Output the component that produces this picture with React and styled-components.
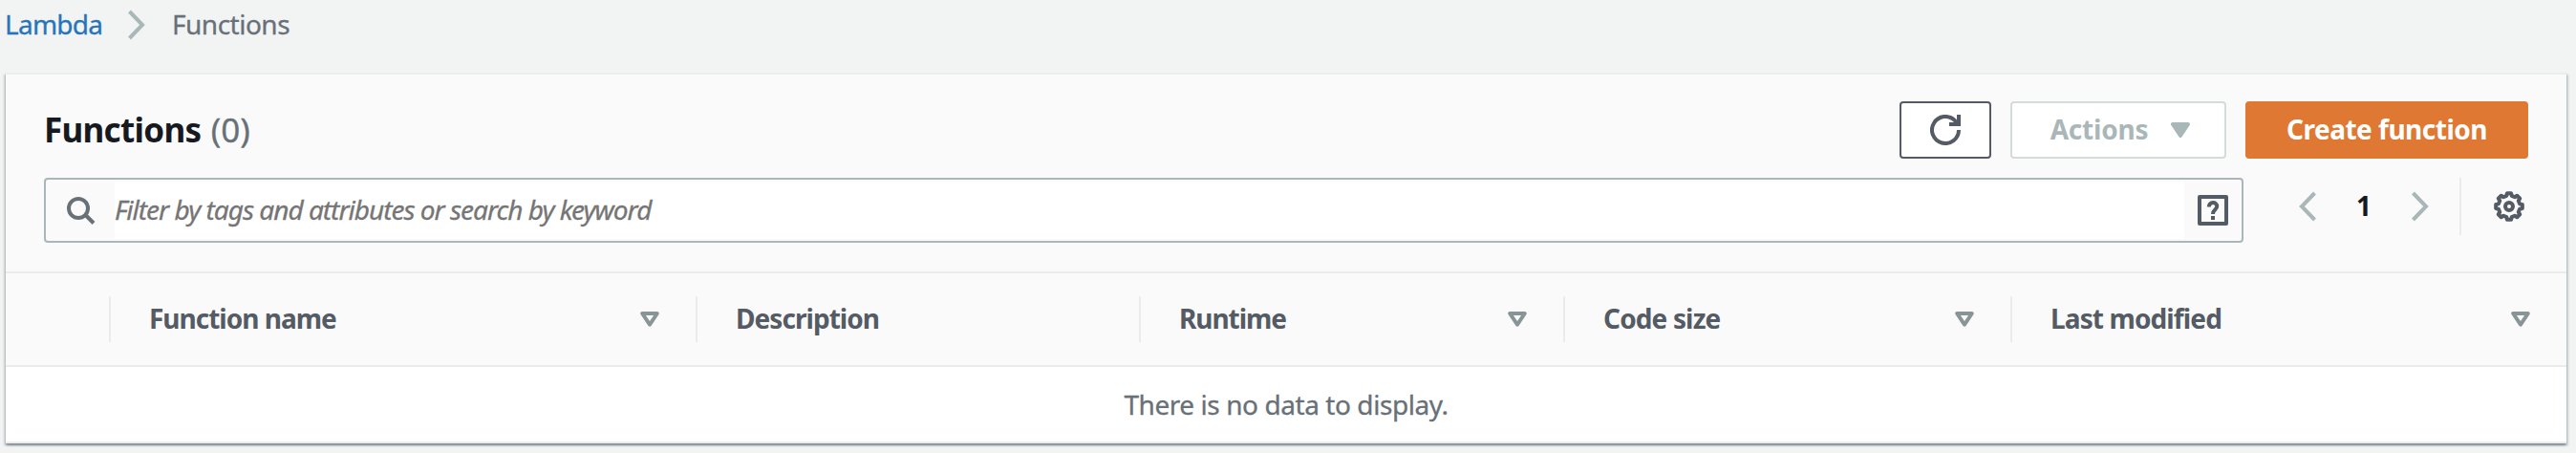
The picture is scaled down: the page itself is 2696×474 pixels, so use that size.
import React from "react";
import styled, { createGlobalStyle } from "styled-components";

const Global = createGlobalStyle`
  * { box-sizing: border-box; }
  body {
    margin: 0;
    background: #f2f4f4;
    font-family: "Noto Sans", "Open Sans", sans-serif;
    font-size: 28px;
    color: #545b64;
  }
`;

const Page = styled.div`
  height: 474px;
  overflow: hidden;
`;

const Breadcrumbs = styled.nav`
  display: flex;
  align-items: center;
  height: 76px;
  padding: 0 0 24px 5px;
  line-height: 36px;
`;

const Crumb = styled.span`
  padding-bottom: 2px;
  color: ${(p) => (p.$link ? "#2874bb" : "#687078")};
  width: ${(p) => (p.$w ? `${p.$w}px` : "auto")};
  letter-spacing: ${(p) => p.$ls}px;
  -webkit-text-stroke: 0.3px currentColor;
  white-space: nowrap;
`;

const CrumbArrow = styled.svg`
  width: 18px;
  height: 32px;
  margin: 0 28px 0 26px;
`;

const Panel = styled.section`
  margin: 0 10px 0 6px;
  height: 388px;
  background: #fff;
  border-top: 2px solid #eaeded;
  border-bottom: 2px solid #eaeded;
  box-shadow: 0 2px 2px 0 rgba(0, 28, 36, 0.3), 2px 2px 2px 0 rgba(0, 28, 36, 0.15),
    -2px 2px 2px 0 rgba(0, 28, 36, 0.15);
`;

const PanelHeader = styled.header`
  height: 208px;
  padding: 28px 40px 0;
  background: #fafafa;
  border-bottom: 2px solid #ebebeb;
`;

const TitleRow = styled.div`
  display: flex;
  align-items: center;
  height: 60px;
  gap: 20px;
`;

const Title = styled.h2`
  flex: 1;
  margin: 0;
  font-size: 35px;
  line-height: 44px;
  font-weight: 700;
  color: #16191f;
  letter-spacing: -0.7px;
`;

const Count = styled.span`
  margin-left: 2px;
  font-weight: 400;
  letter-spacing: 0;
  color: #687078;
  -webkit-text-stroke: 0.3px currentColor;
`;

const Button = styled.button`
  display: flex;
  align-items: center;
  justify-content: center;
  gap: 24px;
  width: ${(p) => p.$w}px;
  height: 60px;
  padding: 0 0 0 ${(p) => p.$inset || 0}px;
  border: 2px solid ${(p) => p.$line};
  border-radius: 4px;
  background: ${(p) => p.$bg || "#fff"};
  color: ${(p) => p.$fg};
  font: 700 28px/40px "Noto Sans", "Open Sans", sans-serif;
  letter-spacing: ${(p) => p.$ls || 0}px;
  white-space: nowrap;
`;

const ButtonText = styled.span`
  padding-bottom: 2px;
`;

const FilterRow = styled.div`
  display: flex;
  margin-top: 20px;
`;

const SearchBox = styled.div`
  display: flex;
  align-items: center;
  flex: 1;
  height: 68px;
  padding: 2px 14px 2px 22px;
  border: 2px solid #aab7b8;
  border-radius: 4px;
`;

const SearchField = styled.div`
  flex: 1;
  height: 60px;
  margin: 0 14px 0 18px;
  background: #fff;
  color: #757575;
  font-style: italic;
  font-size: 28px;
  line-height: 58px;
  letter-spacing: -1px;
  -webkit-text-stroke: 0.3px currentColor;
  white-space: nowrap;
`;

const Pager = styled.div`
  display: flex;
  align-items: center;
  height: 60px;
  padding-left: 58px;
`;

const PageNumber = styled.span`
  width: 100px;
  padding-bottom: 2px;
  text-align: center;
  font-weight: 700;
  color: #16191f;
`;

const Settings = styled.div`
  display: flex;
  align-items: center;
  height: 60px;
  margin-left: 32px;
  padding: 0 4px 0 34px;
  border-left: 2px solid #ebebeb;
`;

const TableHead = styled.div`
  display: grid;
  grid-template-columns: 108px 614px 464px 444px 468px 582px;
  align-items: center;
  height: 98px;
  background: #fafafa;
  border-bottom: 2px solid #ebebeb;
`;

const HeadCell = styled.div`
  display: flex;
  align-items: center;
  justify-content: space-between;
  height: 48px;
  padding: 0 38px 0 40px;
  border-left: ${(p) => (p.$blank ? "none" : "2px solid #ebebeb")};
  font-weight: 700;
  white-space: nowrap;
`;

const HeadLabel = styled.span`
  padding-bottom: 2px;
  letter-spacing: ${(p) => p.$ls}px;
`;

const EmptyRow = styled.div`
  display: flex;
  align-items: center;
  justify-content: center;
  height: 78px;
  color: #687078;
  letter-spacing: -0.43px;
  -webkit-text-stroke: 0.3px currentColor;
`;

const Chevron = ({ left }) => (
  <svg width="18" height="32" viewBox="0 0 18 32" fill="none" stroke="#aab7b8" strokeWidth="4">
    <path d={left ? "M16.5 2 L3 16 L16.5 30" : "M1.5 2 L15 16 L1.5 30"} />
  </svg>
);

const SortIcon = () => (
  <svg width="20" height="16" viewBox="0 0 20 16" fill="none" stroke="#879596" strokeWidth="4" strokeLinejoin="round">
    <path d="M2.2 2 H17.8 L10 13.6 Z" />
  </svg>
);

const columns = [
  { label: "Function name", sort: true, spacing: -1 },
  { label: "Description", spacing: -0.95 },
  { label: "Runtime", sort: true, spacing: -1.05 },
  { label: "Code size", sort: true, spacing: -0.85 },
  { label: "Last modified", sort: true, spacing: -0.88 },
];

const gearPath = (() => {
  const pts = [];
  for (let i = 0; i < 8; i++) {
    const base = (i * Math.PI) / 4 - Math.PI / 2;
    [[-0.24, 11.4], [-0.15, 14], [0.15, 14], [0.24, 11.4]].forEach(([o, r]) =>
      pts.push(`${(16 + r * Math.cos(base + o)).toFixed(2)} ${(16 + r * Math.sin(base + o)).toFixed(2)}`)
    );
  }
  return `M${pts.join("L")}Z`;
})();

export default function App() {
  return (
    <Page>
      <Global />
      <Breadcrumbs>
        <Crumb $link $w={103} $ls={-0.75}>Lambda</Crumb>
        <CrumbArrow viewBox="0 0 18 32" fill="none" stroke="#aab7b8" strokeWidth="4">
          <path d="M1.5 2 L15 16 L1.5 30" />
        </CrumbArrow>
        <Crumb $ls={-0.5}>Functions</Crumb>
      </Breadcrumbs>
      <Panel>
        <PanelHeader>
          <TitleRow>
            <Title>Functions <Count>(0)</Count></Title>
            <Button $w={96} $line="#545b64" $fg="#545b64" aria-label="Refresh">
              <svg width="32" height="32" viewBox="0 0 32 32" fill="none" stroke="#545b64" strokeWidth="4">
                <path d="M30 16 A14 14 0 1 1 26 6.2 L29 10" />
                <path d="M30 0 V10 H20" />
              </svg>
            </Button>
            <Button $w={226} $line="#d5dbdb" $fg="#aab7b8" $inset={4} $ls={-0.2}>
              <ButtonText>Actions</ButtonText>
              <svg width="20" height="16" viewBox="0 0 20 16">
                <path d="M2 2 H18 L10 14 Z" fill="#aab7b8" stroke="#aab7b8" strokeWidth="4" strokeLinejoin="round" />
              </svg>
            </Button>
            <Button $w={296} $line="#df7832" $bg="#df7832" $fg="#fff" $ls={-0.5}>
              <ButtonText>Create function</ButtonText>
            </Button>
          </TitleRow>
          <FilterRow>
            <SearchBox>
              <svg width="32" height="32" viewBox="0 0 32 32" fill="none" stroke="#687078" strokeWidth="4">
                <circle cx="12" cy="14" r="10" />
                <path d="M19 20.500 L28 29.500" />
              </svg>
              <SearchField>Filter by tags and attributes or search by keyword</SearchField>
              <svg width="32" height="32" viewBox="0 0 32 32" fill="none" stroke="#545b64" strokeWidth="4">
                <rect x="2" y="2" width="28" height="28" strokeLinejoin="round" />
                <path d="M11.8 12.500 C11.8 6.500 20.200 6.500 20.200 12 C20.200 15.500 16 15 16 20 M16 22 V26" />
              </svg>
            </SearchBox>
            <Pager>
              <Chevron left />
              <PageNumber>1</PageNumber>
              <Chevron />
              <Settings>
                <svg width="32" height="32" viewBox="0 0 32 32" fill="none" stroke="#545b64" strokeWidth="4" strokeLinejoin="round">
                  <path d={gearPath} />
                  <circle cx="16" cy="16" r="4" />
                </svg>
              </Settings>
            </Pager>
          </FilterRow>
        </PanelHeader>
        <TableHead>
          <HeadCell $blank />
          {columns.map((c) => (
            <HeadCell key={c.label}>
              <HeadLabel $ls={c.spacing}>{c.label}</HeadLabel>
              {c.sort && <SortIcon />}
            </HeadCell>
          ))}
        </TableHead>
        <EmptyRow>There is no data to display.</EmptyRow>
      </Panel>
    </Page>
  );
}
